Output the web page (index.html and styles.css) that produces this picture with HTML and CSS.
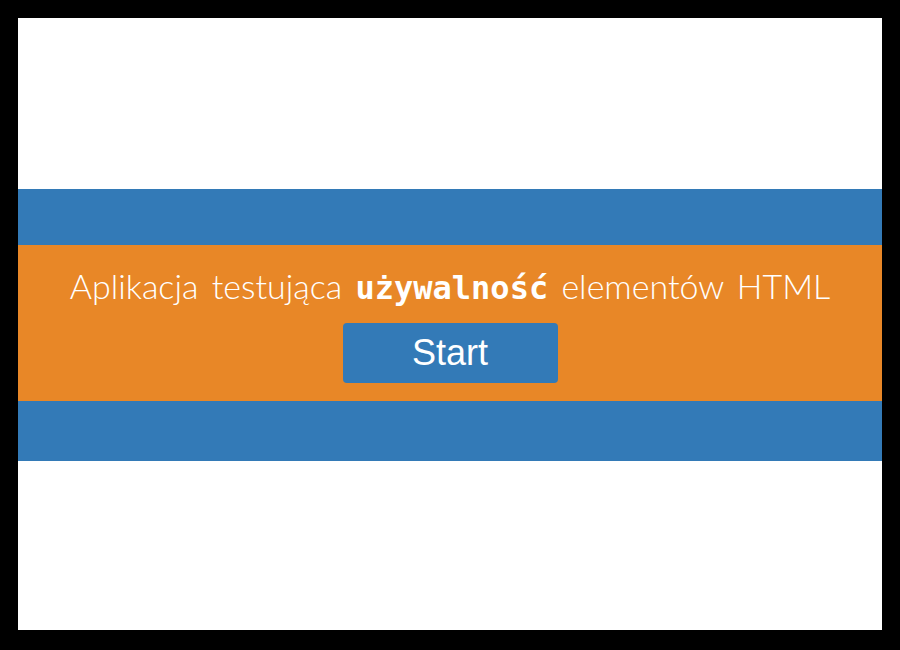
FILE: index.html
```html
<!DOCTYPE html>
<html lang="pl">
<head>
<meta charset="utf-8">
<title>Aplikacja</title>
<link rel="stylesheet" href="styles.css">
</head>
<body>
<div class="page">
  <section class="band">
    <div class="hero">
      <h1 class="title">Aplikacja testująca <code class="mono">używalność</code> elementów HTML</h1>
      <button class="btn-start" type="button">Start</button>
    </div>
  </section>
</div>
</body>
</html>
```

FILE: styles.css
```css
html, body {
  margin: 0;
  padding: 0;
}
body {
  background: #000;
  width: 900px;
  height: 650px;
  padding: 18px;
  box-sizing: border-box;
}
.page {
  background: #fff;
  height: 612px;
  padding-top: 171px;
  box-sizing: border-box;
}
.band {
  background: #337ab7;
  padding: 56px 0 60px;
}
.hero {
  background: #e88727;
  height: 156px;
  box-sizing: border-box;
  padding-top: 21px;
  display: flex;
  flex-direction: column;
  align-items: center;
}
.title {
  margin: 0;
  color: #fff;
  font-family: Lato, "Noto Sans", sans-serif;
  font-weight: 300;
  font-size: 34px;
  line-height: 40px;
  word-spacing: 4px;
  white-space: nowrap;
}
.mono {
  font-family: "DejaVu Sans Mono", "Liberation Mono", monospace;
  font-weight: bold;
  font-size: 32px;
  word-spacing: 0;
}
.btn-start {
  margin-top: 15px;
  width: 215px;
  height: 60px;
  border: none;
  border-radius: 4px;
  background: #337ab7;
  color: #fff;
  font-family: "Liberation Sans", Arial, sans-serif;
  font-size: 36px;
  line-height: 1;
  padding: 0;
}
```
